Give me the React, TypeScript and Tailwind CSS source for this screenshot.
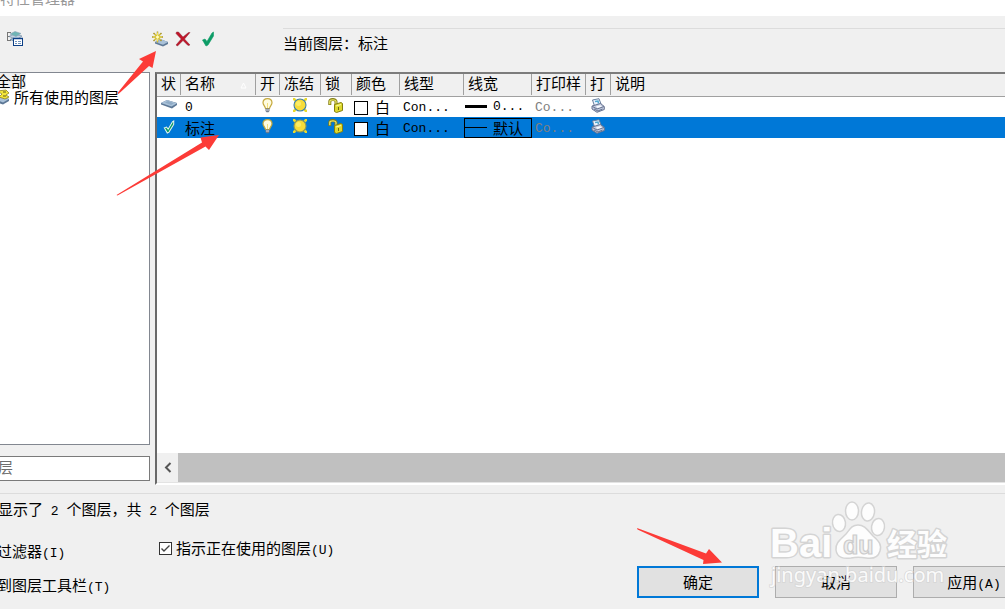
import React from "react";

const Latin = ({ children }: { children: React.ReactNode }) => (
  <span className="whitespace-pre font-['Liberation_Mono',monospace] text-[13px] leading-none">{children}</span>
);

const LayerStatesIcon = () => (
  <svg width="18" height="18" viewBox="0 0 18 18">
    <path d="M0 1.500H4M.5 1.500V10M0 5.500H3M0 9.500H4" stroke="#777" fill="none" />
    <path d="M3 8.500L8 6L15 8L10 11.500Z" fill="#8fb0cc" stroke="#63809b" strokeWidth=".6" />
    <path d="M2 5.500L7 3L15 5L10 8.500Z" fill="#c3d3e2" stroke="#63809b" strokeWidth=".6" />
    <path d="M3 3L8 .5L14 2.500L9 5.500Z" fill="#6fb5b5" stroke="#8aa5b5" strokeWidth=".6" />
    <rect x="6.500" y="7.500" width="9" height="7" fill="#fff" stroke="#0c3f86" />
    <path d="M6 7.500H16" stroke="#0c3f86" strokeWidth="1.500" />
    <path d="M8 10.500H10M11 10.500H14M8 12.500H10M11 12.500H14" stroke="#6f93bd" />
  </svg>
);

const Sheet = () => (
  <svg width="17" height="10" viewBox="0 0 17 10">
    <path d="M0 4L6 1L16 4V6L11 9.500L0 5.500Z" fill="#5d7896" />
    <path d="M0 4L6 1L16 4.200L10.500 7.500Z" fill="#a9c1d8" />
    <path d="M4 3.500L7 2L13 4.200L10 6Z" fill="#8fabc6" />
  </svg>
);

const NewLayerIcon = () => (
  <svg width="18" height="16" viewBox="0 0 18 16">
    <path d="M4 11L9 8L17 11V13L12 15.500L4 12.500Z" fill="#5d7896" />
    <path d="M4 11L9 8L17 11L12 13.700Z" fill="#a9c1d8" />
    <path d="M6.500 .5V11.500M1 6H12M2.500 2L10.500 10M10.500 2L2.500 10" stroke="#a8942a" strokeWidth="1.500" />
    <path d="M6.500 1.500V10.500M2 6H11M3.500 3L9.500 9M9.500 3L3.500 9" stroke="#f9e84c" strokeWidth="1" />
    <circle cx="6.500" cy="6" r="1.500" fill="#fffbc0" />
  </svg>
);

const DeleteIcon = () => (
  <svg width="16" height="16" viewBox="0 0 16 16">
    <path d="M1.500 1L3.500 1L8 6L13.500 1.500H15L9.500 8L15 14L13 14.500L8 9.500L2.500 15L1 14L6.200 8L1 2.500Z" fill="#c01428" stroke="#8c2a38" strokeWidth=".5" />
  </svg>
);

const CheckIcon = ({ outlined = false }: { outlined?: boolean }) => (
  <svg width={outlined ? 12 : 14} height={outlined ? 14 : 16} viewBox="0 0 14 16">
    <path
      d="M1.500 9L4 8L6 10.500L11 2L12.500 1V5L7 14L5 15Z"
      fill="#0c9c66"
      stroke={outlined ? "#e8f6ee" : "#0c9c66"}
      strokeWidth={outlined ? 1.2 : 0.6}
    />
  </svg>
);

const GroupIcon = () => (
  <svg width="16" height="16" viewBox="0 0 16 16">
    <path d="M0 10L7 7L15 10V12L9 15.500L0 12.500Z" fill="#5d7896" />
    <path d="M0 10L7 7L15 10L9 13.500Z" fill="#a9c1d8" />
    <path d="M3 2L12 1L15 4L12 6L15 8L11 10L5 8L8 5Z" fill="#f4e63a" stroke="#8f8420" strokeWidth=".8" />
    <path d="M9 3H12M9 7H12" stroke="#5e5a20" />
  </svg>
);

const BulbIcon = () => (
  <svg width="11" height="15" viewBox="0 0 11 15">
    <path d="M5.500 .7C2.700 .7 1 2.500 1 4.800C1 7 3.200 8 3.500 10.500H7.500C7.800 8 10 7 10 4.800C10 2.500 8.300 .7 5.500 .7Z" fill="#fffce0" stroke="#c5a93c" strokeWidth="1.200" />
    <path d="M5.500 5V10" stroke="#f3df7b" />
    <path d="M3.500 10.500H7.500V13L6.500 14.200H4.500L3.500 13Z" fill="#727b8c" />
    <path d="M4 12H7" stroke="#d3d9e4" />
  </svg>
);

const SunIcon = ({ selected }: { selected: boolean }) => (
  <svg width="14" height="14" viewBox="0 0 14 14">
    <path d="M0 0H2L3.500 2L2 3.500L0 2ZM14 0V2L12 3.500L10.500 2L12 0ZM0 14V12L2 10.500L3.500 12L2 14ZM14 14H12L10.500 12L12 10.500L14 12Z" fill="#e9da2c" />
    <circle cx="7" cy="7" r="6" fill="#f6dc3a" stroke={selected ? "#8f9a5a" : "#3f7fa6"} strokeWidth="1.100" />
    <circle cx="5.500" cy="5.500" r="2.500" fill="#fbec66" />
  </svg>
);

const LockIcon = () => (
  <svg width="15" height="15" viewBox="0 0 15 15">
    <path d="M1.800 7V3.500C1.800 1 8 .8 8 3.500V8" fill="none" stroke="#827c12" strokeWidth="3" />
    <path d="M1.800 6.300V3.500C1.800 1.500 8 1.200 8 3.500V8" fill="none" stroke="#e9e66a" strokeWidth="1.300" />
    <path d="M6.500 6.500L13 4.500L14.500 5.500V12.500L8.500 14.500L6.500 13.500Z" fill="#ded92e" stroke="#85800f" />
    <path d="M8 8L13 6.500" stroke="#fbf7a0" strokeWidth="1.300" />
    <path d="M10.500 9V12" stroke="#716b0f" />
  </svg>
);

const PrinterIcon = () => (
  <svg width="14" height="15" viewBox="0 0 14 15">
    <path d="M1.500 2L8 .7L10 6L3.500 8Z" fill="#edf4ff" stroke="#69809f" />
    <path d="M4 3.500L7 3L7.500 5.500" stroke="#4fa8d0" strokeWidth="1.500" fill="none" />
    <path d="M1 8L9.500 5.500L13.300 8.500V11.500L6 14.300L1 11Z" fill="#c2cbe0" stroke="#68738f" />
    <path d="M1.500 8.500L6 11L13 8.500M3 11L7 13L11.500 11" stroke="#68738f" fill="none" />
    <path d="M5 8.500L9 7.200L11 8.500L6.500 10Z" fill="#fafcff" />
  </svg>
);

const columns = [
  { label: "状", width: "w-[24px]" },
  { label: "名称", width: "w-[75px]" },
  { label: "开", width: "w-[24px]" },
  { label: "冻结", width: "w-[41px]" },
  { label: "锁", width: "w-[31px]" },
  { label: "颜色", width: "w-[48px]" },
  { label: "线型", width: "w-[64px]" },
  { label: "线宽", width: "w-[68px]" },
  { label: "打印样", width: "w-[54px]" },
  { label: "打", width: "w-[25px]" },
  { label: "说明", width: "" },
];

const layers = [
  { name: "0", current: false },
  { name: "标注", current: true },
];

const iconBox = "flex h-5 items-start justify-center pr-[2px] pt-px";
const latinBox = "flex h-5 items-center pt-[2px]";

function LayerTable() {
  return (
    <table className="w-full table-fixed border-collapse text-left leading-4">
      <thead>
        <tr className="h-[22px] border-b border-[#a0a0a0] bg-[#f0f0f0]">
          {columns.map((c, i) => (
            <th key={c.label} scope="col" className={`p-0 align-top font-normal ${c.width}`}>
              <div className={`flex h-[21px] items-start justify-between whitespace-nowrap pl-1 leading-[18px] ${i < columns.length - 1 ? "border-r border-[#a0a0a0]" : ""}`}>
                {c.label}
                {i === 1 && (
                  <svg width="7" height="7" viewBox="0 0 7 7" className="mr-2 mt-2">
                    <path d="M3.500 1L6 6H1Z" fill="none" stroke="#fff" />
                  </svg>
                )}
              </div>
            </th>
          ))}
        </tr>
      </thead>
      <tbody>
        {layers.map((l) => (
          <tr key={l.name} className={`h-[21px] whitespace-nowrap ${l.current ? "bg-[#0078d7]" : "bg-white"}`}>
            <td className="p-0">
              <div className="flex h-5 items-start justify-center pt-[2px]">{l.current ? <CheckIcon outlined /> : <Sheet />}</div>
            </td>
            <td className="p-0 pl-1">
              {l.current ? <div className="flex h-5 items-center">{l.name}</div> : <div className={latinBox}><Latin>{l.name}</Latin></div>}
            </td>
            <td className="p-0"><div className={iconBox}><BulbIcon /></div></td>
            <td className="p-0"><div className={iconBox}><SunIcon selected={l.current} /></div></td>
            <td className="p-0"><div className={iconBox}><LockIcon /></div></td>
            <td className="p-0">
              <div className="flex h-5 items-center gap-[7px] pl-[2px]">
                <span className="mt-[2px] size-[14px] shrink-0 border border-black bg-white" />
                <span>白</span>
              </div>
            </td>
            <td className="p-0 pl-[3px]"><div className={latinBox}><Latin>Con...</Latin></div></td>
            <td className="p-0">
              <div className={`flex h-5 items-center gap-[6px] border ${l.current ? "border-black" : "border-transparent"}`}>
                <span className={`w-[22px] shrink-0 bg-black ${l.current ? "h-px" : "h-[3px]"}`} />
                {l.current ? "默认" : <Latin>0...</Latin>}
              </div>
            </td>
            <td className="p-0 pl-[3px] text-[#808080]"><div className={latinBox}><Latin>Co...</Latin></div></td>
            <td className="p-0"><div className={iconBox}><PrinterIcon /></div></td>
            <td className="p-0" />
          </tr>
        ))}
      </tbody>
    </table>
  );
}

const Watermark = () => (
  <svg width="190" height="96" viewBox="0 0 190 96" className="pointer-events-none absolute right-[50px] bottom-[16px]">
    <g transform="translate(0 -4)">
      <g fill="#fdfdfd" stroke="#d4d4d4" strokeWidth="1.500">
        <ellipse cx="74" cy="30" rx="6.500" ry="8.500" transform="rotate(-8 74 30)" />
        <ellipse cx="87" cy="18" rx="6.500" ry="9" />
        <ellipse cx="103" cy="19" rx="6.500" ry="9" transform="rotate(8 103 19)" />
        <ellipse cx="113" cy="34" rx="6.500" ry="8.500" transform="rotate(8 113 34)" />
        <path d="M93 32C100 32 103 38 108 43C114 48 117 52 115 58C113 65 107 66 101 65C95 64 91 64 86 65C79 66 72 65 71 57C70 50 76 46 81 41C85 36 87 32 93 32Z" />
      </g>
      <g fill="#fdfdfd" stroke="#d4d4d4" strokeWidth="3" paintOrder="stroke" strokeLinejoin="round">
        <text x="5" y="64" fontSize="40" fontWeight="700" fontFamily="Liberation Sans, sans-serif">Bai</text>
        <text x="122" y="62" fontSize="30" fontWeight="700" fontFamily="Noto Sans CJK SC, sans-serif">经验</text>
      </g>
      <text x="78" y="61" fontSize="25" fontWeight="700" fill="#eee" stroke="#ccc" strokeWidth="1.200" fontFamily="Liberation Sans, sans-serif">du</text>
    </g>
    <text x="6" y="85" fontSize="20" fill="#fff" stroke="#d4d4d4" strokeWidth="1.500" paintOrder="stroke" fontFamily="Noto Sans, sans-serif" opacity=".85">jingyan.baidu.com</text>
  </svg>
);

const Arrows = () => (
  <svg className="pointer-events-none absolute inset-0 h-full w-full" fill="#fc3b37">
    <path d="M156 51L139 59L143 61.500L117.500 93L118.500 94L149 66L152.500 68Z" />
    <path d="M219 135L200.500 137.500L202 142.500L116.500 195L117.500 195.500L205.500 146.500L209 150Z" />
    <path d="M722 562.500L709 549L706 553.500L637 528L637.500 529.500L703.500 560L703 564Z" />
  </svg>
);

const dialogButton = "h-8 w-[122px] shrink-0 bg-[#e1e1e1] text-center";

export default function App() {
  return (
    <div className="relative flex h-screen flex-col overflow-hidden bg-[#f0f0f0] font-['Noto_Sans_CJK_SC',sans-serif] text-[15px] leading-5 text-black">
      <header className="flex h-4 shrink-0 items-start overflow-hidden bg-white text-[#999]">
        <h1 className="-mt-3 whitespace-nowrap">特性管理器</h1>
      </header>

      <div className="flex h-14 shrink-0 items-start pt-3">
        <div className="flex w-[283px] shrink-0 items-start pt-[3px]">
          <button type="button" aria-label="图层状态管理器" className="ml-[7px]"><LayerStatesIcon /></button>
          <div className="ml-auto mr-[68px] flex gap-[6px]">
            <button type="button" aria-label="新建图层"><NewLayerIcon /></button>
            <button type="button" aria-label="删除图层"><DeleteIcon /></button>
            <button type="button" aria-label="置为当前" className="ml-1"><CheckIcon /></button>
          </div>
        </div>
        <div className="flex-1 border-t border-[#dcdcdc] pt-1">当前图层：标注</div>
      </div>

      <main className="flex min-h-0 flex-1 gap-[5px]">
        <aside className="flex w-[150px] shrink-0 flex-col gap-[11px] pb-1">
          <ul className="min-h-0 flex-1 border border-l-0 border-[#828790] bg-white leading-4">
            <li className="-ml-1 flex"><span className="bg-[#f0f0f0] leading-4">全部</span></li>
            <li className="-ml-[6px] flex items-center gap-1 whitespace-nowrap leading-4"><GroupIcon />所有使用的图层</li>
          </ul>
          <input
            aria-label="搜索图层"
            defaultValue="层"
            className="-ml-[2px] h-[25px] w-[152px] shrink-0 border border-l-0 border-[#7a7a7a] bg-white pb-1 text-[#6d6d6d] outline-none"
          />
        </aside>

        <section className="flex min-w-0 flex-1 flex-col border-b-2 border-l-2 border-t-2 border-b-white border-l-[#696969] border-t-[#7c7c7c] bg-white">
          <LayerTable />
          <div className="mt-auto flex h-[30px] shrink-0 border-b border-[#e3e3e3]">
            <button type="button" aria-label="向左滚动" className="flex w-[21px] items-center justify-center bg-[#f0f0f0]">
              <svg width="8" height="11" viewBox="0 0 8 11"><path d="M6.500 1L2 5.500L6.500 10" fill="none" stroke="#555" strokeWidth="2" /></svg>
            </button>
            <div className="flex-1 bg-[#c0c0c0]" />
          </div>
        </section>
      </main>

      <footer className="mt-2 h-[116px] shrink-0 border-t border-[#dcdcdc]">
        <p className="-ml-[2px] h-[26px] whitespace-nowrap pt-[5px]">显示了<Latin> 2 </Latin>个图层，共<Latin> 2 </Latin>个图层</p>
        <div className="flex items-start whitespace-nowrap">
          <div className="-ml-[3px] flex w-[162px] shrink-0 flex-col gap-[14px] pt-[21px]">
            <span>过滤器<Latin>(I)</Latin></span>
            <span>到图层工具栏<Latin>(T)</Latin></span>
          </div>
          <label className="flex items-center gap-1 pt-[18px]">
            <span className="grid size-[13px]">
              <input
                type="checkbox"
                defaultChecked
                className="peer col-start-1 row-start-1 size-[13px] appearance-none border border-[#333] bg-white"
              />
              <svg viewBox="0 0 13 13" className="pointer-events-none invisible col-start-1 row-start-1 size-[13px] peer-checked:visible">
                <path d="M2.500 6.500L5 9L10.500 3.500" fill="none" stroke="#444" strokeWidth="1.400" />
              </svg>
            </span>
            <span>指示正在使用的图层<Latin>(U)</Latin></span>
          </label>
          <div className="-mr-[30px] ml-auto flex gap-4 pt-[46px]">
            <button type="button" className={`${dialogButton} border-2 border-[#0078d7]`}>确定</button>
            <button type="button" className={`${dialogButton} border border-[#adadad]`}>取消</button>
            <button type="button" className={`${dialogButton} border border-[#adadad]`}>应用<Latin>(A)</Latin></button>
          </div>
        </div>
      </footer>

      <Watermark />
      <Arrows />
    </div>
  );
}
